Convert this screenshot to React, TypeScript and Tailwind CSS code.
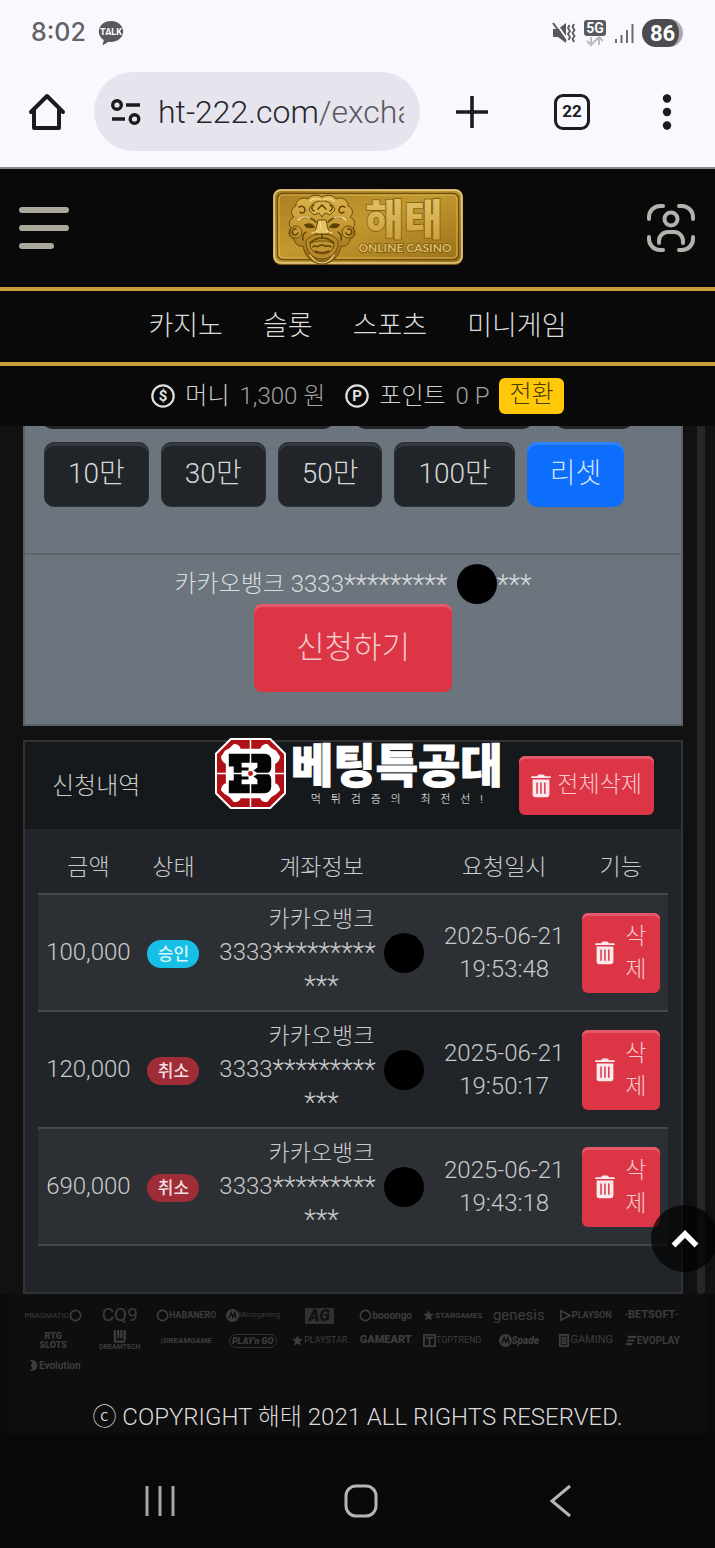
import type { ReactNode } from 'react';

type Status = 'approved' | 'canceled';

interface RequestRow {
  amount: string;
  status: Status;
  date: string;
  time: string;
}

const menus = ['카지노', '슬롯', '스포츠', '미니게임'];
const amounts = ['10만', '30만', '50만', '100만'];

const requests: RequestRow[] = [
  { amount: '100,000', status: 'approved', date: '2025-06-21', time: '19:53:48' },
  { amount: '120,000', status: 'canceled', date: '2025-06-21', time: '19:50:17' },
  { amount: '690,000', status: 'canceled', date: '2025-06-21', time: '19:43:18' },
];

function TrashIcon() {
  return (
    <svg className="h-6 w-5 shrink-0" viewBox="0 0 20 24" aria-hidden="true">
      <path
        fill="#fbe9eb"
        fillRule="evenodd"
        d="M6.5 1.6Q7 .5 8.2 .5h3.6q1.2 0 1.7 1.1l.3.7H19q.8 0 .8.8v1H.2v-1q0-.8.8-.8h5.2zM1.6 5.4h16.8v15.4q0 2.4-2.4 2.4H4q-2.4 0-2.4-2.4zM5.3 8.4v11.4h1.5V8.4zm3.9 0v11.4h1.5V8.4zm3.9 0v11.4h1.5V8.4z"
      />
    </svg>
  );
}

function StatusBar() {
  return (
    <div className="flex h-[66px] items-center justify-between pl-[31px] pr-8 text-[#626267]">
      <div className="flex items-center gap-3">
        <span className="font-['Inter'] text-[25px] font-medium">8:02</span>
        <svg className="h-8 w-[26px]" viewBox="0 0 26 32" aria-label="KakaoTalk">
          <path
            fill="#58585d"
            d="M13 4C6 4 .8 8.700.8 14.500c0 4 2 6.800 5 8.500l-1.300 5.500 6-3.800c.8.1 1.600.2 2.500.2 7 0 12.200-4.600 12.200-10.400S20 4 13 4z"
          />
          <text x="13" y="18" textAnchor="middle" fontSize="9" fontWeight="800" fontFamily="Roboto, sans-serif" fill="#f9f8ff">
            TALK
          </text>
        </svg>
      </div>
      <div className="flex items-center gap-2">
        <svg className="h-6 w-6" viewBox="0 0 24 24" aria-label="vibrate">
          <path fill="#58585d" d="M1 8h5l8-6v20l-8-6H1z" />
          <path stroke="#f9f8ff" strokeWidth="2" d="M3 1l12 17" />
          <path stroke="#58585d" strokeWidth="2" d="M1 2l13 18" />
          <path
            stroke="#58585d"
            strokeWidth="1.800"
            fill="none"
            d="M17.500 4l-1.500 3 2 3-2 3 2 3-1.500 3M22 3l-1.500 3 2 3-2 3 2 3-2 3 1.500 3"
          />
        </svg>
        <svg className="h-7 w-[22px]" viewBox="0 0 22 28" aria-label="5G">
          <rect width="22" height="16" y="1" rx="3" fill="#58585d" />
          <text x="11" y="14" textAnchor="middle" fontSize="14" fontWeight="700" fontFamily="Roboto, sans-serif" fill="#f9f8ff">
            5G
          </text>
          <path stroke="#bcbcc4" strokeWidth="2" fill="none" d="M7 18v8M3 22l4 4 4-4M15 26v-8M11 22l4-4 4 4" />
        </svg>
        <svg className="h-6 w-5" viewBox="0 0 20 24" aria-label="signal">
          <path stroke="#6b6b70" strokeWidth="2" d="M2 22v-4M7.500 22v-8M13 22V9M18.500 22V3" />
        </svg>
        <span className="flex h-7 w-[41px] items-center justify-center rounded-full border-r-4 border-[#aaaab0] bg-[#4b4b50] pl-1 font-['Roboto'] text-[22px] font-bold text-white">
          86
        </span>
      </div>
    </div>
  );
}

function BrowserBar() {
  return (
    <div className="flex h-[103px] items-start border-b-2 border-[#8a8a8c] pl-[27px] pr-[37px] pt-[6px]">
      <button type="button" aria-label="home" className="flex h-[79px] w-10 items-center">
        <svg className="h-10 w-10" viewBox="0 0 40 40" fill="none" stroke="#1c1b20" strokeWidth="4">
          <path strokeLinejoin="round" strokeLinecap="round" d="M7 18v18h25V18M4 20L20 4l16 16" />
        </svg>
      </button>
      <button
        type="button"
        className="ml-[27px] flex h-[79px] min-w-0 flex-1 items-center gap-4 rounded-full bg-[#e6e5ee] pl-4 pr-4 text-left"
      >
        <svg className="h-8 w-8 shrink-0" viewBox="0 0 32 32" fill="none" stroke="#1c1b20" strokeWidth="3.400">
          <circle cx="7" cy="9" r="4.300" />
          <path d="M16 9h14M2 23h13" />
          <circle cx="24.500" cy="23" r="4.300" />
        </svg>
        <span className="flex-1 overflow-hidden whitespace-nowrap font-['Roboto'] text-[32px] text-[#26252c]">
          ht-222.com<span className="text-[#5a5962]">/excha</span>
        </span>
      </button>
      <div className="ml-9 flex h-[79px] items-center gap-[66px]">
        <button type="button" aria-label="new tab">
          <svg className="h-8 w-8" viewBox="0 0 32 32" stroke="#1c1b20" strokeWidth="3.600">
            <path d="M16 0v32M0 16h32" />
          </svg>
        </button>
        <button
          type="button"
          className="flex h-9 w-9 items-center justify-center rounded-[9px] border-[3px] border-[#1c1b20] font-['Roboto'] text-[17px] font-bold text-[#1c1b20]"
        >
          22
        </button>
        <button type="button" aria-label="more" className="flex w-[22px] justify-center">
          <svg className="h-9 w-3" viewBox="0 0 12 36" fill="#1c1b20">
            <circle cx="6" cy="4.500" r="4.200" />
            <circle cx="6" cy="18" r="4.200" />
            <circle cx="6" cy="31.500" r="4.200" />
          </svg>
        </button>
      </div>
    </div>
  );
}

function CasinoLogo() {
  return (
    <svg className="h-[78px] w-[192px]" viewBox="0 0 192 78" role="img" aria-label="해태 ONLINE CASINO">
      <defs>
        <linearGradient id="plate" x1="0" y1="0" x2="1" y2="1">
          <stop offset="0" stopColor="#a97d1f" />
          <stop offset=".45" stopColor="#c2992f" />
          <stop offset="1" stopColor="#9a7019" />
        </linearGradient>
        <linearGradient id="face" x1="0" y1="0" x2="0" y2="1">
          <stop offset="0" stopColor="#d9b34c" />
          <stop offset=".5" stopColor="#c2952e" />
          <stop offset="1" stopColor="#8a6112" />
        </linearGradient>
        <linearGradient id="letters" x1="0" y1="0" x2="0" y2="1">
          <stop offset="0" stopColor="#e8cb72" />
          <stop offset="1" stopColor="#c99b34" />
        </linearGradient>
      </defs>
      <rect x="1" y="0" width="190" height="76" rx="8" fill="#7c5a14" />
      <rect x="2" y="1" width="188" height="73" rx="7" fill="url(#plate)" stroke="#ecd28a" strokeWidth="1.500" />
      <rect x="5.500" y="4.500" width="181" height="66" rx="5" fill="none" stroke="#6e4d0d" strokeWidth="1.500" />
      <rect x="7" y="6" width="178" height="63" rx="4" fill="none" stroke="#d9b650" />
      {/* haetae mask */}
      <g stroke="#6a4a0c" strokeWidth="1" strokeLinejoin="round">
        <path
          fill="url(#face)"
          d="M50 8c-5-3-12-2-14 2-6-3-13 2-12 7-5 2-6 8-2 11-5 2-6 8-3 11-4 4-2 10 3 11 1 6 6 8 9 7 1 9 9 18 19 18s18-9 19-18c4 1 8-1 9-7 5-1 7-7 3-11 3-3 2-9-3-11 4-3 3-9-2-11 1-5-6-10-12-7-2-4-9-5-14-2z"
        />
        <path fill="#d8b24a" d="M50 12c-7 0-12 4-13 9l5 5 5-2 3 4 3-4 5 2 5-5c-1-5-6-9-13-9z" />
        <path fill="#b68a28" d="M34 52c3-5 9-7 16-7s13 2 16 7c1 9-6 18-16 18S33 61 34 52z" />
        <path fill="#c0932f" d="M38 55c4-3 8-3 12-3s8 0 12 3c0 6-5 10-12 10s-12-4-12-10z" />
        <path fill="#e6c464" d="M46 31h8l2 9c2 2 1 5-2 5h-8c-3 0-4-3-2-5z" />
        <circle cx="24" cy="43" r="6" fill="#c59a33" />
        <circle cx="76" cy="43" r="6" fill="#c59a33" />
      </g>
      <g fill="none" stroke="#5f4007" strokeWidth="1.500" strokeLinecap="round">
        <path d="M30 29c5-2 10 0 14 4M70 29c-5-2-10 0-14 4" />
        <path fill="#5d3f06" d="M33 36c4-2 7-1 9 2-4 1-7 1-9-2zM67 36c-4-2-7-1-9 2 4 1 7 1 9-2z" />
        <path d="M50 45v4M50 49c-4 0-8 1-12 5M50 49c4 0 8 1 12 5M41 58c2-3 4 1 6-1s4-1 6 0 4-2 6 1M43 62c4 2 10 2 14 0" />
        <path d="M24 40a3 3 0 1 0 2 4M76 40a3 3 0 1 1-2 4M27 18c3-2 6 0 6 3s-3 4-5 2M73 18c-3-2-6 0-6 3s3 4 5 2" />
        <path d="M42 16c-3 1-3 5 0 6M58 16c3 1 3 5 0 6M46 20l4-4 4 4M34 43c-3 2-4 5-3 8M66 43c3 2 4 5 3 8" />
      </g>
      <g fill="none" stroke="#f3dc94" strokeWidth="1.200" strokeLinecap="round">
        <path d="M38 12c3-3 8-3 11-1M51 11c4-2 8-2 11 1M48 33l1 7M26 31c3-3 8-4 12-2M62 29c4-2 9-1 12 2M40 44l6-2M54 42l6 2" />
        <path d="M38 66c3 5 7 8 12 8s9-3 12-8" />
      </g>
      <g textAnchor="middle" fill="url(#letters)" stroke="#7b5812" strokeWidth="1.500" paintOrder="stroke">
        <text x="132" y="46" fontFamily="'Noto Sans CJK KR', sans-serif" fontWeight="900" fontSize="42">
          해태
        </text>
        <text x="133" y="63" fill="#dfbd62" fontFamily="Lato, sans-serif" fontWeight="700" fontSize="12">
          ONLINE CASINO
        </text>
      </g>
    </svg>
  );
}

function SiteHeader() {
  return (
    <header className="bg-[#090909]">
      <div className="flex h-[118px] items-center justify-between pl-[19px] pr-[18px]">
        <button type="button" aria-label="menu" className="flex w-[72px] flex-col gap-3">
          <span className="h-[6px] w-[50px] rounded-full bg-[#a9a89b]" />
          <span className="h-[6px] w-[50px] rounded-full bg-[#a9a89b]" />
          <span className="h-[6px] w-[35px] rounded-full bg-[#a9a89b]" />
        </button>
        <CasinoLogo />
        <button type="button" aria-label="account">
          <svg className="h-[52px] w-[52px]" viewBox="0 0 52 52" fill="none" stroke="#b3b2ab" strokeWidth="4" strokeLinecap="round">
            <path d="M4 17v-2A11 11 0 0 1 15 4h3M34 4h3a11 11 0 0 1 11 11v2M48 35v2a11 11 0 0 1-11 11h-3M18 48h-3A11 11 0 0 1 4 37v-2" />
            <circle cx="26" cy="17" r="6.500" />
            <path d="M14 41v-2a9 9 0 0 1 9-9h6a9 9 0 0 1 9 9v2" />
          </svg>
        </button>
      </div>
      <nav className="flex h-[79px] items-center justify-center gap-10 border-y-4 border-[#c99d3c] text-[27px] text-[#dcdcdc]">
        {menus.map((menu) => (
          <a key={menu} href="#">
            {menu}
          </a>
        ))}
      </nav>
      <div className="flex h-[60px] items-center justify-center gap-[10px] text-[24px] text-[#cfcfcf]">
        <CoinIcon label="$" />
        <span>머니</span>
        <span className="mr-[10px] text-[#a2a2a2]">1,300 원</span>
        <CoinIcon label="P" />
        <span>포인트</span>
        <span className="text-[#a2a2a2]">0 P</span>
        <button type="button" className="h-9 rounded-md bg-[#ffc907] px-[10px] pb-1 leading-8 text-[#4d3c06]">
          전환
        </button>
      </div>
    </header>
  );
}

function CoinIcon({ label }: { label: string }) {
  return (
    <svg className="h-6 w-6" viewBox="0 0 24 24" aria-hidden="true">
      <circle cx="12" cy="12" r="10.700" fill="none" stroke="#dedede" strokeWidth="2.200" />
      <text x="12" y="17.200" textAnchor="middle" fontSize="15" fontWeight="700" fontFamily="Roboto, sans-serif" fill="#dedede">
        {label}
      </text>
    </svg>
  );
}

function DarkButton({ children }: { children: ReactNode }) {
  return (
    <button
      type="button"
      className="h-[65px] rounded-[10px] border border-[#2b3036] bg-[#212529] px-[23px] pb-[2px] text-[28px] text-[#d6d7d8] shadow-[inset_0_3px_0_#363a3e]"
    >
      {children}
    </button>
  );
}

function Redacted() {
  return <span className="inline-block h-10 w-10 shrink-0 rounded-full bg-black" />;
}

function Stars({ count }: { count: number }) {
  return <span className="inline-block align-middle text-[27px] leading-none">{'*'.repeat(count)}</span>;
}

function ExchangeForm() {
  return (
    <section className="border-x-2 border-b-2 border-[#59616a] bg-[#6c757d]">
      <div className="flex h-[3px] items-end overflow-hidden pl-[17px]">
        <span className="h-10 w-[292px] shrink-0 rounded-b-[10px] bg-[#212529]" />
        <span className="ml-[21px] h-10 w-[78px] shrink-0 rounded-b-[10px] bg-[#212529]" />
        <span className="ml-[22px] h-10 w-[78px] shrink-0 rounded-b-[10px] bg-[#212529]" />
        <span className="ml-[22px] h-10 w-[78px] shrink-0 rounded-b-[10px] bg-[#212529]" />
      </div>
      <div className="flex gap-3 pb-[46px] pl-[19px] pt-[13px]">
        {amounts.map((amount) => (
          <DarkButton key={amount}>{amount}</DarkButton>
        ))}
        <button
          type="button"
          className="h-[65px] rounded-[10px] bg-[#0d6efd] px-[23px] pb-[2px] text-[28px] text-[#cfe1fb] shadow-[inset_0_3px_0_#2f82fb]"
        >
          리셋
        </button>
      </div>
      <div className="flex flex-col items-center border-t-2 border-[#5c646c] pb-8 pt-[9px]">
        <p className="flex h-10 items-center text-[24px] text-[#d9dbdd]">
          <span className="mr-[10px]">
            카카오뱅크 3333
            <Stars count={9} />
          </span>
          <Redacted />
          <span>
            <Stars count={3} />
          </span>
        </p>
        <button
          type="button"
          className="h-[88px] rounded-lg bg-[#dc3545] px-[42px] text-[31px] text-[#f6c9cd] shadow-[inset_0_3px_0_#e5596a]"
        >
          신청하기
        </button>
      </div>
    </section>
  );
}

function Watermark() {
  return (
    <div className="absolute left-[190px] top-[-4px] flex items-start gap-[5px]">
      <svg className="h-[71px] w-[71px]" viewBox="0 0 72 72" aria-hidden="true">
        <path fill="#b01116" stroke="#fff" strokeWidth="2" d="M16 1h40l15 15v40L56 71H16L1 56V16z" />
        <path
          fill="#fff"
          d="M19 6q6 0 7 5h20q1-5 7-5 4 5 9 7l4 6q-1 6-5 7v20q4 1 5 7-3 4-9 7l-4 5q-6 0-7-4H26q-1 4-7 4l-4-5q-6-3-9-7 1-6 5-7V26q-4-1-5-7l4-6q5-2 9-7z"
        />
        <path
          fill="#050505"
          fillRule="evenodd"
          d="M14 16h36q7 0 7 7v7q0 4-4 6 4 2 4 6v7q0 7-7 7H14V43h5V29h-5zM27 25v5h7v3h-7v6h7v3h-7v5h16v-5l-4-3 5-3-5-3 4-3v-5z"
        />
        <path stroke="#fff" strokeWidth="1.500" d="M36 1v30M36 41v30M1 36h28M43 36h28" />
        <circle cx="36" cy="36" r="2.500" fill="#c4161c" />
      </svg>
      <div className="flex flex-col items-center text-white">
        <span className="font-['Noto_Sans_CJK_KR'] text-[46px] font-black leading-[48px] [-webkit-text-stroke:1px_#fff]">
          베팅특공대
        </span>
        <span className="flex w-[172px] justify-between text-[11px] leading-7">
          {Array.from('먹튀검증의 최전선!').map((letter, index) => (
            <span key={index}>{letter}</span>
          ))}
        </span>
      </div>
    </div>
  );
}

function StatusBadge({ status }: { status: Status }) {
  if (status === 'approved') {
    return (
      <span className="inline-block h-7 w-[52px] rounded-full bg-[#17bfe6] text-[17px] font-medium leading-7 text-[#d9f6fc]">
        승인
      </span>
    );
  }
  return (
    <span className="inline-block h-7 w-[52px] rounded-full bg-[#9f2d38] text-[17px] font-medium leading-7 text-[#f3dfe1]">
      취소
    </span>
  );
}

function RequestTable() {
  return (
    <table className="w-full table-fixed text-center text-[23px] leading-[33px] text-[#c9cacb]">
      <colgroup>
        <col className="w-[16%]" />
        <col className="w-[11%]" />
        <col className="w-[36%]" />
        <col className="w-[22%]" />
        <col className="w-[15%]" />
      </colgroup>
      <thead>
        <tr className="h-[65px] border-b-2 border-[#45494d]">
          <th className="pt-3 font-light">금액</th>
          <th className="pt-3 font-light">상태</th>
          <th className="pt-3 font-light">계좌정보</th>
          <th className="pt-3 font-light">요청일시</th>
          <th className="pt-3 font-light">기능</th>
        </tr>
      </thead>
      <tbody>
        {requests.map((request) => (
          <tr key={request.time} className="h-[117px] border-b-2 border-[#45494d] odd:bg-[#2c3034]">
            <td className="text-[24px]">{request.amount}</td>
            <td>
              <StatusBadge status={request.status} />
            </td>
            <td>
              <div>카카오뱅크</div>
              <div className="flex h-[33px] items-center justify-center gap-2 text-[24px]">
                <span>
                  3333
                  <Stars count={9} />
                </span>
                <Redacted />
              </div>
              <div className="h-[33px] text-[24px]">
                <Stars count={3} />
              </div>
            </td>
            <td className="text-[24px]">
              <div>{request.date}</div>
              <div>{request.time}</div>
            </td>
            <td>
              <button
                type="button"
                className="inline-flex h-20 w-[78px] items-center justify-center gap-[10px] rounded-md bg-[#dc3545] align-middle text-[#f6c9cd] shadow-[inset_0_3px_0_#e5596a]"
              >
                <TrashIcon />
                <span className="w-[21px]">
                  삭<br />제
                </span>
              </button>
            </td>
          </tr>
        ))}
      </tbody>
    </table>
  );
}

function RequestHistory() {
  return (
    <section className="relative border-2 border-[#303235] bg-[#212529]">
      <div className="flex h-[87px] items-center justify-between bg-[#16191c] pl-[27px] pr-[27px]">
        <h2 className="text-[24px] text-[#c9cacb]">신청내역</h2>
        <button
          type="button"
          className="flex h-[59px] items-center gap-[6px] rounded-md bg-[#dc3545] px-3 text-[23px] text-[#f6c9cd] shadow-[inset_0_3px_0_#e5596a]"
        >
          <TrashIcon />
          <span>전체삭제</span>
        </button>
      </div>
      <div className="px-[13px] pb-[46px]">
        <RequestTable />
      </div>
      <Watermark />
    </section>
  );
}

const circle = <circle cx="7" cy="7" r="5.500" fill="none" stroke="currentColor" strokeWidth="1.800" />;
const star = <path fill="currentColor" d="M7 1l1.600 4.200 4.400.2-3.400 2.800 1.100 4.300L7 10.100l-3.700 2.400 1.100-4.300L1 5.400l4.400-.2z" />;
const disc = (
  <>
    <circle cx="7" cy="7" r="7" fill="currentColor" />
    <path stroke="#0e0e0e" strokeWidth="1.500" fill="none" d="M3 10l2.500-6 2 5 2-5 1.500 6" />
  </>
);

interface Provider {
  name: string;
  style: string;
  icon?: ReactNode;
  layout?: string;
}

const providers: Provider[] = [
  { name: 'PRAGMATIC', style: 'text-[8px] font-normal', icon: circle, layout: 'flex-row-reverse' },
  { name: 'CQ9', style: 'text-[19px] font-normal' },
  { name: 'HABANERO', style: 'text-[9px] font-bold', icon: circle },
  { name: 'Microgaming', style: 'text-[7px] font-normal', icon: disc },
  { name: 'AG', style: 'text-[16px] font-black italic bg-[#303030] text-[#111] px-1 leading-4' },
  { name: 'booongo', style: 'text-[10px] font-bold', icon: circle },
  { name: 'STARGAMES', style: 'text-[8px] font-bold', icon: star },
  { name: 'genesis', style: 'text-[15px] font-normal' },
  {
    name: 'PLAYSON',
    style: 'text-[9px] font-bold',
    icon: <path fill="none" stroke="currentColor" strokeWidth="1.800" d="M2 2l10 5-10 5z" />,
  },
  { name: '·BETSOFT·', style: 'text-[11px] font-bold' },
  { name: 'RTG SLOTS', style: 'text-[9px] font-black leading-[9px] w-10 text-center' },
  {
    name: 'DREAMTECH',
    style: 'text-[7px] font-bold leading-[8px]',
    layout: 'flex-col',
    icon: <path stroke="currentColor" strokeWidth="2.400" d="M2 0v11M5.500 0v9M9 0v9M12.500 0v11M1 12.500h12" />,
  },
  { name: '(DREAMGAME', style: 'text-[8px] font-bold italic' },
  { name: "PLAY'n GO", style: 'text-[9px] font-black italic border border-[#303030] rounded-full px-[2px] leading-3' },
  { name: 'PLAYSTAR', style: 'text-[9px] font-normal', icon: star },
  { name: 'GAMEART', style: 'text-[11px] font-black' },
  {
    name: 'TOPTREND',
    style: 'text-[9px] font-normal',
    icon: <path fill="none" stroke="currentColor" strokeWidth="2" d="M1 1h12v12H1zM3 4h8M7 4v8" />,
  },
  { name: 'Spade', style: 'text-[10px] font-black italic', icon: disc },
  {
    name: 'GAMING',
    style: 'text-[11px] font-normal',
    icon: <path fill="none" stroke="currentColor" strokeWidth="2" d="M3 1h9v12H3zM6 4h3v6H6z" />,
  },
  {
    name: 'EVOPLAY',
    style: 'text-[10px] font-bold',
    icon: <path fill="none" stroke="currentColor" strokeWidth="2.400" d="M4 3h9M3 7h8M2 11h7" />,
  },
  {
    name: 'Evolution',
    style: 'text-[10px] font-bold',
    icon: <path fill="currentColor" d="M4 1h3q5 1 5 6t-5 6H4l3-3-2-3 2-3z" />,
  },
];

function Footer() {
  return (
    <footer className="mx-2 flex-1 bg-[#0e0e0e]">
      <ul className="grid grid-cols-10 pl-3 pr-[22px] pt-[9px] font-['Roboto'] text-[#3d3d3d]">
        {providers.map(({ name, style, icon, layout }) => (
          <li key={name} className={`flex h-[25px] items-center justify-center ${layout ?? ''}`}>
            {icon && (
              <svg className="h-[13px] w-[13px] shrink-0" viewBox="0 0 14 14" aria-hidden="true">
                {icon}
              </svg>
            )}
            <span className={style}>{name}</span>
          </li>
        ))}
      </ul>
      <p className="pt-[23px] text-center text-[24px] leading-8 text-[#dadada]">ⓒ COPYRIGHT 해태 2021 ALL RIGHTS RESERVED.</p>
    </footer>
  );
}

function SystemNav() {
  return (
    <div className="flex h-[115px] items-center justify-between bg-[#080808] pl-[142px] pr-[136px] pt-5">
      <button type="button" aria-label="recent apps">
        <svg className="h-9 w-9" viewBox="0 0 36 36" stroke="#a5a5a5" strokeWidth="3">
          <path d="M5 3v30M18 3v30M31 3v30" />
        </svg>
      </button>
      <button type="button" aria-label="home">
        <svg className="h-9 w-9" viewBox="0 0 36 36" fill="none" stroke="#b5b5b5" strokeWidth="3">
          <rect x="3" y="3" width="30" height="30" rx="10" />
        </svg>
      </button>
      <button type="button" aria-label="back">
        <svg className="h-9 w-9" viewBox="0 0 36 36" fill="none" stroke="#b5b5b5" strokeWidth="3">
          <path d="M27 3L9 18l18 15" />
        </svg>
      </button>
    </div>
  );
}

export default function App() {
  return (
    <div className="flex min-h-screen flex-col overflow-hidden bg-[#0b0b0b] font-['Roboto','Noto_Sans_CJK_KR',sans-serif] font-light">
      <div className="bg-[#f9f8ff]">
        <StatusBar />
        <BrowserBar />
      </div>
      <SiteHeader />
      <main className="relative flex gap-[14px] bg-[#111111] pl-[23px] pr-[10px]">
        <div className="flex flex-1 flex-col gap-[14px]">
          <ExchangeForm />
          <RequestHistory />
        </div>
        <div className="w-2 rounded-b-full bg-[#262626]" />
        <button
          type="button"
          aria-label="back to top"
          className="absolute bottom-[22px] right-[-3px] flex h-[67px] w-[67px] items-center justify-center rounded-full bg-black/70"
        >
          <svg className="h-7 w-7" viewBox="0 0 28 28" fill="none" stroke="#fff" strokeWidth="5.500">
            <path d="M2.500 20.500L14 9l11.500 11.500" />
          </svg>
        </button>
      </main>
      <Footer />
      <SystemNav />
    </div>
  );
}
